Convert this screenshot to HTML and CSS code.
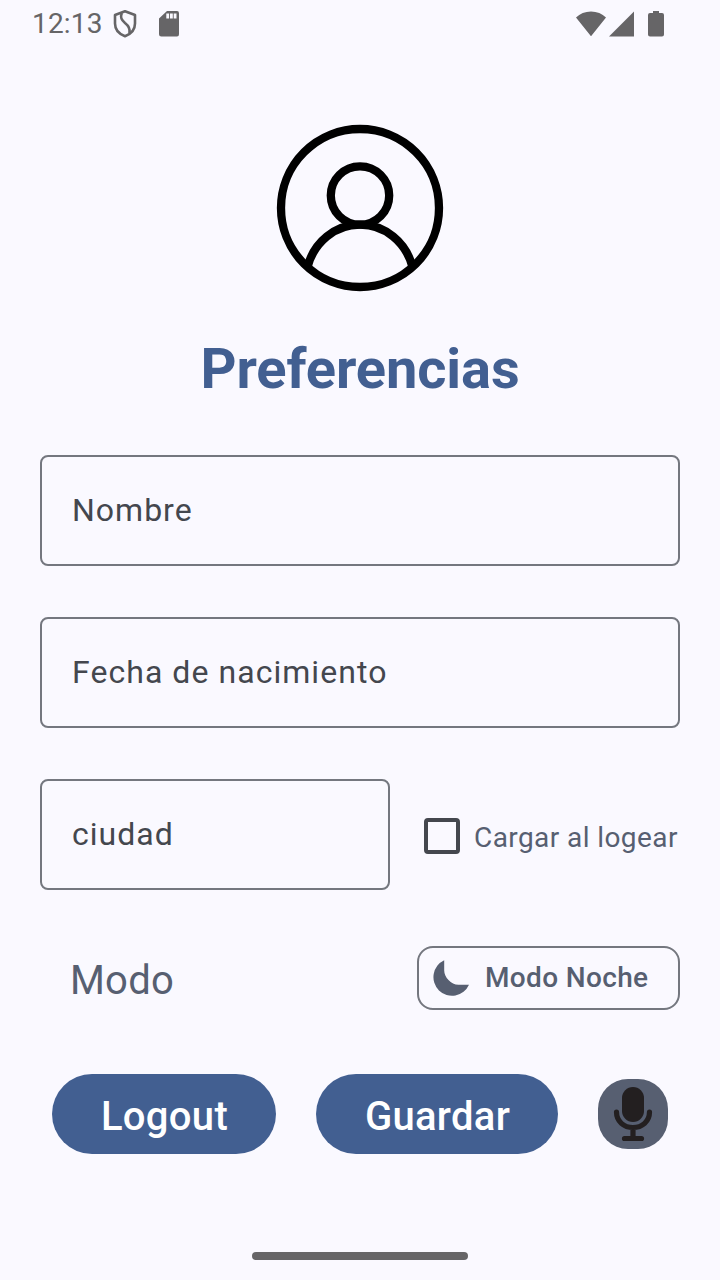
FILE: index.html
```html
<!DOCTYPE html>
<html lang="es">
<head>
<meta charset="utf-8">
<title>Preferencias</title>
<link rel="stylesheet" href="styles.css">
</head>
<body>
<div class="screen">
  <header class="status">
    <span class="clock">12:13</span>
    <svg class="shield" width="24" height="30" viewBox="0 0 24 30" fill="none" stroke="#666567" stroke-width="2.6" stroke-linejoin="round"><path d="M12 2.2 22 6v8.500c0 5.800-4 10.500-10 12.700C6 25 2 20.300 2 14.500V6Z"/><path d="M8.800 4C7 8.500 8.300 11 12 14c4.300 3.300 5.300 6 4.500 10.200" stroke-width="2.600"/></svg>
    <svg class="sd" width="21" height="26" viewBox="0 0 21 26"><path fill="#666567" d="M8 0h10q2 0 2 2.300v20.900q0 2.300-2 2.300H2.300Q0 25.500 0 23.200V7.500Z"/><path fill="#faf9ff" d="M7.300 2.500h2.800v5H7.300zM11 2.500h2.800v5H11zM14.700 2.500h2.800v5h-2.800z"/></svg>
    <svg class="signals" width="90" height="28" viewBox="0 0 90 28" fill="#666567"><path d="M0 7.500Q6 1.500 15 1.500T30 7.500L15 26.300ZM33 26.500 58 1.500v25ZM77 1h6v2h3q2 0 2 2v19.500q0 2-2 2H74q-2 0-2-2V5q0-2 2-2h3Z"/></svg>
  </header>
  <main class="content">
    <svg class="avatar" width="168" height="168" viewBox="0 0 168 168" fill="none" stroke="#000" stroke-width="8.300"><circle cx="84" cy="84" r="79"/><circle cx="84" cy="71.500" r="29.200"/><path d="M31.500 143C38 118 59 100.700 84 100.700S130 118 136.500 143"/></svg>
    <h1 class="title">Preferencias</h1>
    <div class="field">Nombre</div>
    <div class="field date">Fecha de nacimiento</div>
    <div class="row">
      <div class="field city">ciudad</div>
      <div class="check"><span class="box"></span><span class="check-label">Cargar al logear</span></div>
    </div>
    <div class="mode">
      <span class="mode-label">Modo</span>
      <div class="chip"><svg width="38" height="38" viewBox="0 0 38 38"><path fill="#575f71" d="M13.200 1.300V11.500C13.200 18 20 25.800 27.500 25.800H38A18.600 18.600 0 1 1 13.200 1.300Z"/></svg><span class="chip-label">Modo Noche</span></div>
    </div>
    <div class="actions">
      <div class="button logout">Logout</div>
      <div class="button save">Guardar</div>
      <div class="mic"><svg width="70" height="70" viewBox="0 0 70 70"><rect x="24" y="8" width="22" height="35" rx="11" fill="#231f20"/><path d="M18.500 33C18.500 42.500 26 48.500 35 48.500S51.500 42.500 51.500 33M35 49v10M26.500 59.500h17" fill="none" stroke="#231f20" stroke-width="5.200" stroke-linecap="round"/></svg></div>
    </div>
  </main>
  <div class="home"></div>
</div>
</body>
</html>
```
FILE: styles.css
```css
* { box-sizing: border-box; }
body { margin: 0; background: #faf9ff; font-family: Roboto, sans-serif; }
.screen { width: 720px; height: 1280px; display: flex; flex-direction: column; align-items: center; padding-bottom: 20px; }
svg { display: block; flex: none; }
.status { width: 100%; height: 48px; display: flex; align-items: center; padding: 0 54px 0 32px; }
.clock { width: 81px; font-size: 28px; line-height: 48px; color: #666567; letter-spacing: 0.2px; }
.sd { margin-left: 22px; }
.signals { margin-left: auto; }
.content { width: 640px; display: flex; flex-direction: column; margin-top: 76px; }
.avatar { align-self: center; }
.title { margin: 39px 0 48px; font-size: 56px; line-height: 76px; font-weight: 700; text-align: center; letter-spacing: -0.1px; color: #425f91; }
.field { height: 111px; border: 2px solid #74777f; border-radius: 8px; padding-left: 30px; margin-bottom: 51px; font-size: 32px; line-height: 107px; letter-spacing: 1px; color: #44474e; white-space: nowrap; }
.date { letter-spacing: 1.05px; }
.row { display: flex; justify-content: space-between; height: 162px; }
.city { width: 350px; }
.check { height: 113px; width: 256px; display: flex; align-items: center; gap: 14px; }
.box { width: 36px; height: 36px; border: 4px solid #44474e; border-radius: 4px; flex: none; }
.check-label { font-size: 28px; line-height: 36px; letter-spacing: 0.42px; color: #575f71; white-space: nowrap; padding-top: 4px; }
.mode { display: flex; justify-content: space-between; align-items: center; margin-top: 5px; padding-left: 30px; height: 64px; }
.mode-label { font-size: 40px; line-height: 48px; padding-top: 6px; color: #575f71; letter-spacing: 0.2px; }
.chip { width: 263px; height: 64px; border: 2px solid #74777f; border-radius: 16px; display: flex; align-items: center; gap: 15px; padding-left: 13px; }
.chip svg { margin: 0 1px 0 -1px; }
.chip-label { font-size: 28px; line-height: 36px; font-weight: 500; color: #575f71; letter-spacing: 0.35px; white-space: nowrap; }
.actions { display: flex; align-items: center; gap: 40px; margin-top: 64px; padding-left: 12px; }
.button { height: 80px; border-radius: 40px; background: #425f91; color: #fff; font-size: 40px; font-weight: 500; line-height: 80px; text-align: center; padding: 3px 0 0 1px; letter-spacing: 0.3px; }
.logout { width: 224px; }
.save { width: 242px; }
.mic { width: 70px; height: 70px; border-radius: 30px; background: #575f71; }
.home { width: 216px; height: 8px; border-radius: 4px; background: #666567; margin-top: auto; }
```
